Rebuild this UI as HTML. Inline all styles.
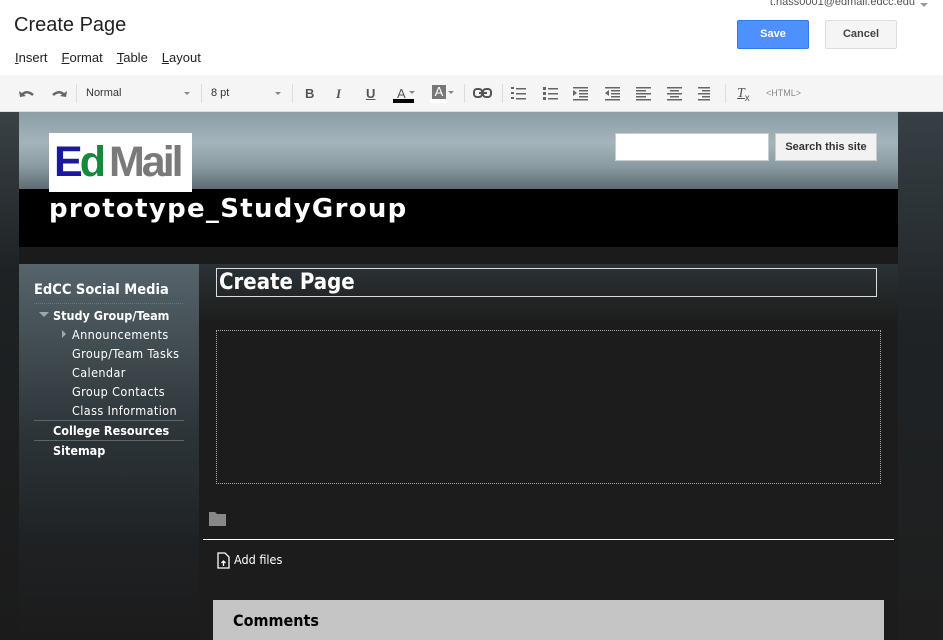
<!DOCTYPE html>
<html><head><meta charset="utf-8"><style>
*{margin:0;padding:0;box-sizing:border-box}
body{width:943px;height:640px;overflow:hidden;background:#1b1b1b;font-family:"Liberation Sans",Arial,sans-serif;position:relative}
.top{position:absolute;left:0;top:0;width:943px;height:75px;background:#fff}
.title{position:absolute;left:14px;top:14px;font-size:20px;color:#222}
.menu{position:absolute;left:15px;top:50px;font-size:13px;color:#222}
.menu span{margin-right:14px}
.menu u{text-decoration:underline}
.email{position:absolute;right:28px;top:-4px;font-size:11px;color:#555}
.email:after{content:"";position:absolute;right:-13px;top:7px;border:4px solid transparent;border-top-color:#999}
.btn{position:absolute;top:20px;height:29px;border-radius:2px;font-size:11px;font-weight:bold;text-align:center;line-height:27px}
.save{left:737px;width:72px;background:#4d90fe;border:1px solid #3079ed;color:#fff}
.cancel{left:825px;width:72px;background:#f5f5f5;border:1px solid #ddd;color:#444}
.tb{position:absolute;left:0;top:75px;width:943px;height:37px;background:#f5f5f5;border-bottom:1px solid #ddd;font-size:11px;color:#333}
.tb .i{position:absolute;top:0;height:37px;line-height:37px;color:#555;font-weight:bold}
.sep{position:absolute;top:9px;width:1px;height:19px;background:#ddd}
.dd{position:absolute;top:17px;border:3px solid transparent;border-top-color:#888}
.hdr{position:absolute;left:19px;top:112px;width:879px;height:77px;background:linear-gradient(#8c9ea6,#a3b4bb 40%,#8a9ba2 70%,#5d6c72)}
.black{position:absolute;left:19px;top:189px;width:879px;height:58px;background:#000}
.logo{position:absolute;left:49px;top:133px;width:143px;height:59px;background:#fff;font-weight:bold;font-size:43px;letter-spacing:-3px;padding:8px 0 0 5px;line-height:42px;white-space:nowrap}
.site{position:absolute;left:49px;top:194px;font-family:"DejaVu Sans",sans-serif;font-size:26px;font-weight:bold;color:#fff;letter-spacing:1.3px}
.sbox{position:absolute;left:615px;top:133px;width:154px;height:28px;background:#fff;border:1px solid #ccc}
.sbtn{position:absolute;left:775px;top:133px;width:102px;height:28px;background:#f2f2f2;border:1px solid #ccc;font-size:11px;font-weight:bold;color:#333;text-align:center;line-height:27px}
.leftstrip{position:absolute;left:0;top:112px;width:19px;height:528px;background:linear-gradient(#3a4246,#1e2224 30%,#1b1b1b)}
.rightstrip{position:absolute;left:898px;top:112px;width:45px;height:528px;background:linear-gradient(#374045,#1f2326 40%,#1e1e1e)}
.side{position:absolute;left:19px;top:264px;width:180px;height:376px;background:linear-gradient(#56646b,#2c3438 45%,#1e2123 75%,#1b1b1b);font-family:"DejaVu Sans Condensed","DejaVu Sans",sans-serif;color:#fff}
.main{position:absolute;left:199px;top:264px;width:699px;height:376px;background:linear-gradient(#2b3236,#1c1c1c 60px)}
.side .h{position:absolute;left:15px;top:18px;font-size:14.5px;font-weight:bold}
.side .it{position:absolute;font-size:12.5px;letter-spacing:0.4px;white-space:nowrap}
.side .b{font-weight:bold;letter-spacing:0}
.side .ln{position:absolute;left:15px;width:150px;height:1px;background:#5b666b}
.ptitle{position:absolute;left:216px;top:268px;width:661px;height:29px;border:1px solid #ddd;font-family:"DejaVu Sans Condensed","DejaVu Sans",sans-serif;font-size:22px;font-weight:bold;color:#fff;padding-left:2px;line-height:27px}
.edit{position:absolute;left:216px;top:330px;width:665px;height:154px;border:1px dotted #aaa}
.hr{position:absolute;left:203px;top:539px;width:691px;height:1px;background:#fff}
.add{position:absolute;left:234px;top:552px;font-family:"DejaVu Sans Condensed","DejaVu Sans",sans-serif;font-size:12.5px;color:#fff}
.com{position:absolute;left:213px;top:600px;width:671px;height:40px;background:#c5c5c5;font-family:"DejaVu Sans Condensed","DejaVu Sans",sans-serif;font-size:16px;font-weight:bold;color:#000;padding:11px 0 0 20px}
</style></head><body>
<div class="top">
<div class="title">Create Page</div>
<div class="menu"><span><u>I</u>nsert</span><span><u>F</u>ormat</span><span><u>T</u>able</span><span><u>L</u>ayout</span></div>
<div class="email">t.hass0001@edmail.edcc.edu</div>
<div class="btn save">Save</div>
<div class="btn cancel">Cancel</div>
</div>
<div class="tb">
<svg style="position:absolute;left:18px;top:12px" width="60" height="14"><path d="M3 9 Q8 2 15 8" stroke="#666" stroke-width="2.5" fill="none"/><path d="M1 4 L2 10 L8 9Z" fill="#666"/><path d="M47 9 Q42 2 35 8" stroke="#666" stroke-width="2.5" fill="none"/><path d="M49 4 L48 10 L42 9Z" fill="#666"/></svg>
<div class="sep" style="left:76px"></div>
<div class="i" style="left:86px;font-weight:normal;color:#333">Normal</div><div class="dd" style="left:184px"></div>
<div class="sep" style="left:201px"></div>
<div class="i" style="left:211px;font-weight:normal;color:#333">8 pt</div><div class="dd" style="left:275px"></div>
<div class="sep" style="left:292px"></div>
<div class="i" style="left:305px;font-size:13px">B</div>
<div class="i" style="left:336px;font-size:13px;font-style:italic;font-family:'Liberation Serif',serif">I</div>
<div class="i" style="left:366px;font-size:13px;text-decoration:underline">U</div>
<div class="i" style="left:397px;font-size:13px;font-weight:normal">A</div><div style="position:absolute;left:393px;top:24px;width:21px;height:4px;background:#000"></div><div class="dd" style="left:409px;top:16px"></div>
<div style="position:absolute;left:432px;top:10px;width:14px;height:14px;background:#777;color:#fff;font-size:13px;text-align:center;line-height:14px">A</div><div style="position:absolute;left:430px;top:24px;width:18px;height:4px;background:#fff"></div><div class="dd" style="left:448px;top:16px"></div>
<div class="sep" style="left:464px"></div>
<svg style="position:absolute;left:473px;top:13px" width="20" height="11"><rect x="1" y="1" width="8" height="8" rx="3" stroke="#555" stroke-width="2" fill="none"/><rect x="10" y="1" width="8" height="8" rx="3" stroke="#555" stroke-width="2" fill="none"/><rect x="6" y="4" width="8" height="2" fill="#555"/></svg>
<div class="sep" style="left:502px"></div>
<svg style="position:absolute;left:510px;top:11px" width="200" height="15" fill="#666">
<g><rect x="1" y="1" width="3" height="2"/><rect x="1" y="6" width="3" height="2"/><rect x="1" y="11" width="3" height="2"/><rect x="6" y="2" width="10" height="1.5"/><rect x="6" y="7" width="10" height="1.5"/><rect x="6" y="12" width="10" height="1.5"/></g>
<g transform="translate(32,0)"><rect x="1" y="1" width="3" height="3"/><rect x="1" y="6" width="3" height="3"/><rect x="1" y="11" width="3" height="3"/><rect x="6" y="2" width="10" height="1.5"/><rect x="6" y="7" width="10" height="1.5"/><rect x="6" y="12" width="10" height="1.5"/></g>
<g transform="translate(63,0)"><rect x="0" y="1" width="15" height="1.5"/><rect x="6" y="4" width="9" height="1.5"/><rect x="6" y="7" width="9" height="1.5"/><rect x="6" y="10" width="9" height="1.5"/><rect x="0" y="13" width="15" height="1.5"/><path d="M0 4 L4 7 L0 10Z"/></g>
<g transform="translate(95,0)"><rect x="0" y="1" width="15" height="1.5"/><rect x="6" y="4" width="9" height="1.5"/><rect x="6" y="7" width="9" height="1.5"/><rect x="6" y="10" width="9" height="1.5"/><rect x="0" y="13" width="15" height="1.5"/><path d="M4 4 L0 7 L4 10Z"/></g>
<g transform="translate(126,0)"><rect x="0" y="1" width="15" height="1.5"/><rect x="0" y="4" width="10" height="1.5"/><rect x="0" y="7" width="15" height="1.5"/><rect x="0" y="10" width="10" height="1.5"/><rect x="0" y="13" width="15" height="1.5"/></g>
<g transform="translate(157,0)"><rect x="0" y="1" width="15" height="1.5"/><rect x="3" y="4" width="9" height="1.5"/><rect x="0" y="7" width="15" height="1.5"/><rect x="3" y="10" width="9" height="1.5"/><rect x="0" y="13" width="15" height="1.5"/></g>
<g transform="translate(188,0)"><rect x="0" y="1" width="12" height="1.5"/><rect x="4" y="4" width="8" height="1.5"/><rect x="0" y="7" width="12" height="1.5"/><rect x="4" y="10" width="8" height="1.5"/><rect x="0" y="13" width="12" height="1.5"/></g>
</svg>
<div class="sep" style="left:725px"></div>
<div class="i" style="left:737px;font-size:14px;font-style:italic;font-weight:normal;font-family:'Liberation Serif',serif;text-decoration:underline">T<sub style="font-size:10px;font-style:normal;font-family:'Liberation Sans'">x</sub></div>
<div class="i" style="left:766px;font-size:9px;font-weight:normal;color:#888">&lt;HTML&gt;</div>
</div>
<div class="leftstrip"></div><div class="rightstrip"></div>
<div class="hdr"></div><div class="black"></div>
<div class="logo"><span style="color:#1a1a9a">E</span><span style="color:#168a3c">d</span><span style="color:#7a7a7a;margin-left:6px">Mail</span></div>
<div class="site">prototype_StudyGroup</div>
<div class="sbox"></div><div class="sbtn">Search this site</div>
<div class="side">
<div class="h">EdCC Social Media</div>
<div class="ln" style="top:39px;background:repeating-linear-gradient(90deg,#6a767b 0 1px,transparent 1px 2px)"></div>
<div style="position:absolute;left:20px;top:48px;border:5px solid transparent;border-top-color:#9aa;border-bottom:0"></div>
<div class="it b" style="left:34px;top:44px">Study Group/Team</div>
<div style="position:absolute;left:43px;top:66px;border:4px solid transparent;border-left-color:#9aa;border-right:0"></div>
<div class="it" style="left:53px;top:63px">Announcements</div>
<div class="it" style="left:53px;top:82px">Group/Team Tasks</div>
<div class="it" style="left:53px;top:101px">Calendar</div>
<div class="it" style="left:53px;top:120px">Group Contacts</div>
<div class="it" style="left:53px;top:139px">Class Information</div>
<div class="ln" style="top:156px"></div>
<div class="it b" style="left:34px;top:159px">College Resources</div>
<div class="ln" style="top:176px"></div>
<div class="it b" style="left:34px;top:179px">Sitemap</div>
</div>
<div class="main"></div>
<div class="ptitle">Create Page</div>
<div class="edit"></div>
<svg style="position:absolute;left:209px;top:512px" width="18" height="14"><path d="M0 0 H6 L8 2 H17 V14 H0Z" fill="#888"/></svg>
<div class="hr"></div>
<svg style="position:absolute;left:217px;top:552px" width="13" height="17"><path d="M1 1 H8 L12 5 V16 H1Z" fill="none" stroke="#fff" stroke-width="1.3"/><path d="M6.5 14 V9 M4.5 11 L6.5 9 L8.5 11" stroke="#fff" stroke-width="1.3" fill="none"/></svg>
<div class="add">Add files</div>
<div class="com">Comments</div>
</body></html>
